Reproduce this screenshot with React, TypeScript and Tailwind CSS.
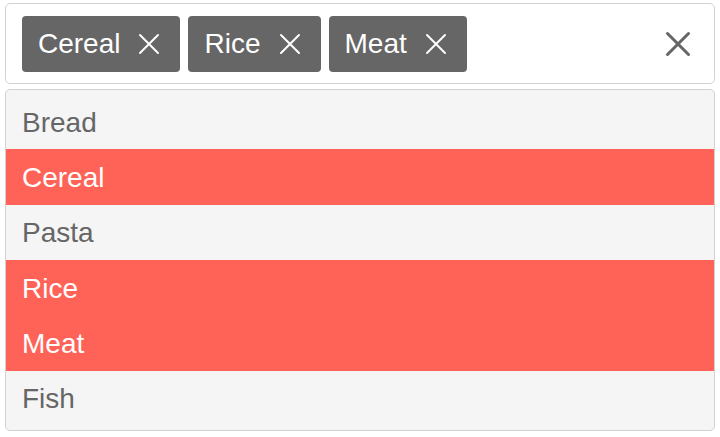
import React from "react";

const selected = ["Cereal", "Rice", "Meat"];
const options = ["Bread", "Cereal", "Pasta", "Rice", "Meat", "Fish"];

const Cross = ({ size, stroke, className }: { size: number; stroke: number; className?: string }) => (
  <svg width={size} height={size} viewBox="0 0 24 24" className={className}>
    <path d="M3 3L21 21M21 3L3 21" stroke="currentColor" strokeWidth={stroke} strokeLinecap="round" />
  </svg>
);

const App = () => {
  return (
    <div className="w-[720px] h-[437px] bg-white px-[5px] pt-[3px] font-['Liberation_Sans',Arial,sans-serif]">
      <div className="h-[81px] border border-[#d2d2d2] rounded-[5px] bg-white flex items-center pl-[16px] pr-[22px]">
        <div className="flex items-center gap-[8px] flex-1">
          {selected.map((s) => (
            <div
              key={s}
              className="h-[56px] bg-[#666666] rounded-[4px] text-white text-[28px] flex items-center pl-[16px] pr-[19px] gap-[17px]"
            >
              <span className="pt-[1px]">{s}</span>
              <Cross size={24} stroke={2} className="text-white" />
            </div>
          ))}
        </div>
        <Cross size={28} stroke={2.6} className="text-[#666666]" />
      </div>
      <div className="mt-[5px] border border-[#d2d2d2] rounded-[5px] bg-[#f5f5f5] py-[4px]">
        {options.map((o) => {
          const on = selected.includes(o);
          return (
            <div
              key={o}
              className={
                on
                  ? "h-[55.33px] flex items-center pl-[16px] pt-[2px] text-[28px] bg-[#ff6257] text-white"
                  : "h-[55.33px] flex items-center pl-[16px] pt-[2px] text-[28px] text-[#666666]"
              }
            >
              {o}
            </div>
          );
        })}
      </div>
    </div>
  );
};

export default App;
